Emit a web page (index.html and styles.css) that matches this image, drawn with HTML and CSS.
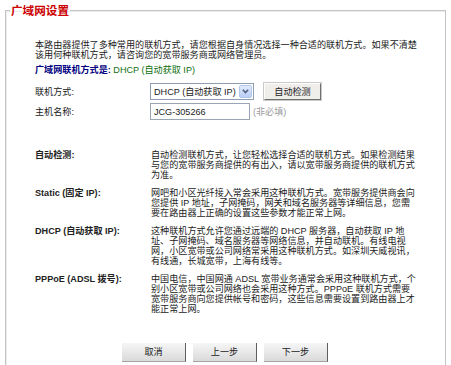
FILE: index.html
```html
<!DOCTYPE html>
<html lang="zh-CN">

<head>
    <meta charset="UTF-8">
    <meta name="viewport" content="width=device-width, initial-scale=1.0">
    <title>广域网设置</title>
    <link rel="stylesheet" href="styles.css">
</head>

<body>

    <fieldset class="panel">
        <legend class="panel-title">广域网设置</legend>
        <div class="panel-body">
            <p class="intro">本路由器提供了多种常用的联机方式，请您根据自身情况选择一种合适的联机方式。如果不清楚<br>该用何种联机方式，请咨询您的宽带服务商或网络管理员。</p>
            <p class="current"><span class="current-label">广域网联机方式是:</span> <span class="current-value">DHCP (自动获取 IP)</span></p>

            <div class="field-row">
                <span class="field-label">联机方式:</span>
                <div class="select-box">
                    <select class="select">
                        <option>DHCP (自动获取 IP)</option>
                        <option>Static (固定 IP)</option>
                        <option>PPPoE (ADSL 拨号)</option>
                    </select>
                    <span class="select-arrow">
                        <svg width="7" height="5" viewBox="0 0 7 5"><path d="M0.8 0.8 L3.5 3.6 L6.2 0.8" fill="none" stroke="#4d6185" stroke-width="1.6"/></svg>
                    </span>
                </div>
                <button class="btn-detect">自动检测</button>
            </div>

            <div class="field-row field-row-tight">
                <span class="field-label">主机名称:</span>
                <input class="text-input" type="text" value="JCG-305266">
                <span class="hint">(非必填)</span>
            </div>

            <table class="help">
                <tr>
                    <th>自动检测:</th>
                    <td>自动检测联机方式，让您轻松选择合适的联机方式。如果检测结果<br>与您的宽带服务商提供的有出入，请以宽带服务商提供的联机方式<br>为准。</td>
                </tr>
                <tr>
                    <th>Static (固定 IP):</th>
                    <td>网吧和小区光纤接入常会采用这种联机方式。宽带服务提供商会向<br>您提供 IP 地址，子网掩码，网关和域名服务器等详细信息，您需<br>要在路由器上正确的设置这些参数才能正常上网。</td>
                </tr>
                <tr>
                    <th>DHCP (自动获取 IP):</th>
                    <td>这种联机方式允许您通过远端的 DHCP 服务器，自动获取 IP 地<br>址、子网掩码、域名服务器等网络信息，并自动联机。有线电视<br>网，小区宽带或公司网络常采用这种联机方式。如深圳天威视讯，<br>有线通，长城宽带，上海有线等。</td>
                </tr>
                <tr>
                    <th>PPPoE (ADSL 拨号):</th>
                    <td>中国电信，中国网通 ADSL 宽带业务通常会采用这种联机方式，个<br>别小区宽带或公司网络也会采用这种方式。PPPoE 联机方式需要<br>宽带服务商向您提供帐号和密码，这些信息需要设置到路由器上才<br>能正常上网。</td>
                </tr>
            </table>

            <div class="actions">
                <button class="btn">取消</button>
                <button class="btn">上一步</button>
                <button class="btn">下一步</button>
            </div>
        </div>
    </fieldset>

</body>

</html>
```

FILE: styles.css
```css
body {
    margin: 0;
    padding-top: 3px;
    background: #fff;
    color: #222;
    font-family: "Liberation Sans", "Noto Sans CJK SC", sans-serif;
    font-size: 9.1px;
    line-height: 10px;
}

.panel {
    margin: 0 5px;
    padding: 0 0 20px;
    border: 1px solid #c4c4c4;
    box-shadow: inset 1px 1px 0 #ececec;
}

.panel-title {
    margin-left: 4px;
    padding: 0 1px;
    color: #c00;
    font-family: "Noto Sans CJK SC", sans-serif;
    font-size: 11.6px;
    font-weight: bold;
    line-height: 14px;
}

.panel-body {
    width: 386px;
    padding: 23px 0 0 29px;
}

.intro {
    margin: 0;
    white-space: nowrap;
}

.current {
    margin: 5px 0 0;
}

.current-label {
    color: #000080;
    font-weight: bold;
}

.current-value {
    color: #107010;
}

.field-row {
    display: flex;
    align-items: center;
    height: 17px;
    margin-top: 8px;
}

.field-row-tight {
    margin-top: 3px;
}

.field-label {
    width: 115px;
    flex-shrink: 0;
}

.select-box {
    display: flex;
    align-items: center;
    box-sizing: border-box;
    width: 104px;
    height: 17px;
    border: 1px solid #8e9fb5;
    background: #fff;
}

.select {
    flex: 1;
    min-width: 0;
    height: 15px;
    padding: 0 0 0 3px;
    border: none;
    background: transparent;
    color: #222;
    font: inherit;
    appearance: none;
    outline: none;
}

.select-arrow {
    display: flex;
    align-items: center;
    justify-content: center;
    box-sizing: border-box;
    width: 13px;
    height: 13px;
    margin-right: 1px;
    border: 1px solid #b3c6ee;
    border-radius: 2px;
    background: linear-gradient(#e2ebfd, #b9cdf6);
}

.btn-detect {
    box-sizing: border-box;
    width: 57px;
    height: 17px;
    margin-left: 10px;
    padding: 0;
    border: 1px solid;
    border-color: #fdfdfd #6f6f6f #6f6f6f #fdfdfd;
    box-shadow: 0 0 0 1px #c9c9c9;
    background: #efeeea;
    color: #222;
    font: inherit;
}

.text-input {
    box-sizing: border-box;
    width: 100px;
    height: 17px;
    padding: 0 3px;
    border: 1px solid #9aa5b4;
    color: #222;
    font: inherit;
    outline: none;
}

.hint {
    margin-left: 3px;
    color: #9a9a9a;
}

.help {
    margin-top: 30px;
    border-collapse: collapse;
}

.help th,
.help td {
    padding: 0 0 8px;
    vertical-align: top;
    text-align: left;
    white-space: nowrap;
}

.help th {
    width: 116px;
    font-weight: bold;
}

.actions {
    display: flex;
    justify-content: center;
    gap: 7px;
    margin-top: 21px;
    padding-right: 6px;
}

.btn {
    width: 64px;
    height: 19px;
    padding: 0;
    border: none;
    border-right: 1px solid #5e5e5e;
    border-bottom: 1px solid #a5a5a5;
    background: linear-gradient(#f6f6f6, #dadada);
    color: #222;
    font: inherit;
}
```
